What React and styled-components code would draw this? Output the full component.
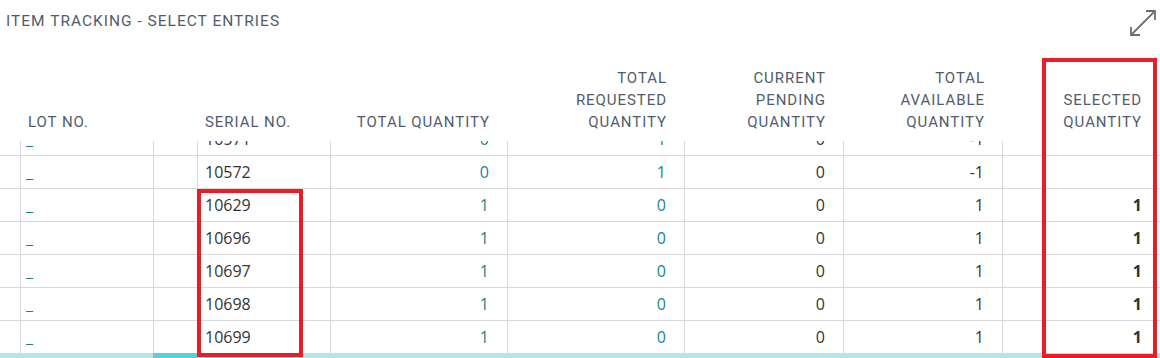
import React, { useLayoutEffect, useRef } from "react"
import styled, { createGlobalStyle } from "styled-components"

const GlobalStyle = createGlobalStyle`
  html, body { margin: 0; padding: 0; background: #fff; }
  body { overflow: hidden; }
`

const COLS = "21px 133px 44px 133px 177px 177px 159px 159px 1fr"

const Page = styled.div`
  position: relative;
  width: 1160px; height: 358px;
  overflow: hidden;
  background: #fff;
  display: flex; flex-direction: column;
`

const TitleBar = styled.div`
  height: 40px;
  display: flex; align-items: center; justify-content: space-between;
  padding: 0 2px 0 6px;
`

const Title = styled.h1`
  margin: 0;
  font-family: Roboto, "Liberation Sans", sans-serif;
  font-size: 15.5px; font-weight: 400;
  color: #505c6d;
  letter-spacing: 1px;
  text-transform: uppercase;
  padding-top: 1px;
`

const ExpandBtn = styled.div`
  width: 30px; height: 30px;
  display: flex; align-items: center; justify-content: center;
  margin-top: 6px;
`

const HeaderRow = styled.div`
  display: grid; grid-template-columns: ${COLS};
  height: 101px;
  align-items: end;
`

const HeadCell = styled.div`
  font-family: Roboto, "Liberation Sans", sans-serif;
  font-size: 15px; line-height: 22px;
  letter-spacing: 0.95px;
  color: #505c6d;
  text-transform: uppercase;
  padding: 0 ${p => (p.$num ? "18px" : "6px")} 8px 7px;
  text-align: ${p => (p.$num ? "right" : "left")};
`

const Body = styled.div`
  height: 212px;
  overflow: hidden;
`

const Row = styled.div`
  display: grid; grid-template-columns: ${COLS};
  height: 33px;
`

const Cell = styled.div`
  box-sizing: border-box;
  height: 33px;
  border-bottom: 1px solid #d8d8dc;
  border-right: ${p => (p.$last ? "none" : "1px solid #d8d8dc")};
  display: flex; align-items: center;
  justify-content: ${p => (p.$num ? "flex-end" : "flex-start")};
  padding: 0 ${p => (p.$num ? "18px" : "7px")} 0 ${p => (p.$link ? "5px" : "7px")};
  font-family: "Open Sans", "Noto Sans", sans-serif;
  font-size: 16px;
  color: ${p => (p.$link ? "#13868c" : "#333")};
  font-weight: ${p => (p.$bold ? 700 : 400)};
`

const Footer = styled.div`
  height: 5px;
  background: #b2e6e8;
  display: grid; grid-template-columns: 153px 44px 1fr;
`

const FooterMark = styled.div`
  grid-column: 2;
  background: #5ccfd6;
`

const RedBox = styled.div`
  position: absolute;
  box-sizing: border-box;
  border: 4.5px solid #ec1c24;
  pointer-events: none;
`

const ExpandIcon = () => (
  <svg width="30" height="30" viewBox="0 0 30 30" fill="none" stroke="#6e6e6e" strokeWidth="1.8">
    <path d="M3 27 L27 3" />
    <path d="M3 19 V27 H12" />
    <path d="M18 3 H27 V12" />
  </svg>
)

const headers = [
  { label: "" },
  { label: "Lot No." },
  { label: "" },
  { label: "Serial No." },
  { label: "Total Quantity", num: true },
  { label: ["Total", "Requested", "Quantity"], num: true },
  { label: ["Current", "Pending", "Quantity"], num: true },
  { label: ["Total", "Available", "Quantity"], num: true },
  { label: ["Selected", "Quantity"], num: true },
]

const rows = [
  { serial: "10571", total: 0, requested: 1, pending: 0, available: -1, selected: "" },
  { serial: "10572", total: 0, requested: 1, pending: 0, available: -1, selected: "" },
  { serial: "10629", total: 1, requested: 0, pending: 0, available: 1, selected: 1 },
  { serial: "10696", total: 1, requested: 0, pending: 0, available: 1, selected: 1 },
  { serial: "10697", total: 1, requested: 0, pending: 0, available: 1, selected: 1 },
  { serial: "10698", total: 1, requested: 0, pending: 0, available: 1, selected: 1 },
  { serial: "10699", total: 1, requested: 0, pending: 0, available: 1, selected: 1 },
]

const App = () => {
  const bodyRef = useRef(null)

  // list is scrolled a little, first row is cut off under the header
  useLayoutEffect(() => {
    if (bodyRef.current) bodyRef.current.scrollTop = 18
  }, [])

  return (
    <Page>
      <GlobalStyle />
      <TitleBar>
        <Title>Item Tracking - Select Entries</Title>
        <ExpandBtn><ExpandIcon /></ExpandBtn>
      </TitleBar>

      <HeaderRow>
        {headers.map((h, i) => (
          <HeadCell key={i} $num={h.num}>
            {Array.isArray(h.label)
              ? h.label.map(l => <div key={l}>{l}</div>)
              : h.label}
          </HeadCell>
        ))}
      </HeaderRow>

      <Body ref={bodyRef}>
        {rows.map(r => (
          <Row key={r.serial}>
            <Cell />
            <Cell $link>_</Cell>
            <Cell />
            <Cell>{r.serial}</Cell>
            <Cell $num $link>{r.total}</Cell>
            <Cell $num $link>{r.requested}</Cell>
            <Cell $num>{r.pending}</Cell>
            <Cell $num>{r.available}</Cell>
            <Cell $num $bold $last>{r.selected}</Cell>
          </Row>
        ))}
      </Body>

      <Footer><FooterMark /></Footer>

      <RedBox style={{ left: 197, top: 189, width: 106, height: 168 }} />
      <RedBox style={{ left: 1042, top: 58, width: 115, height: 300 }} />
    </Page>
  )
}

export default App
